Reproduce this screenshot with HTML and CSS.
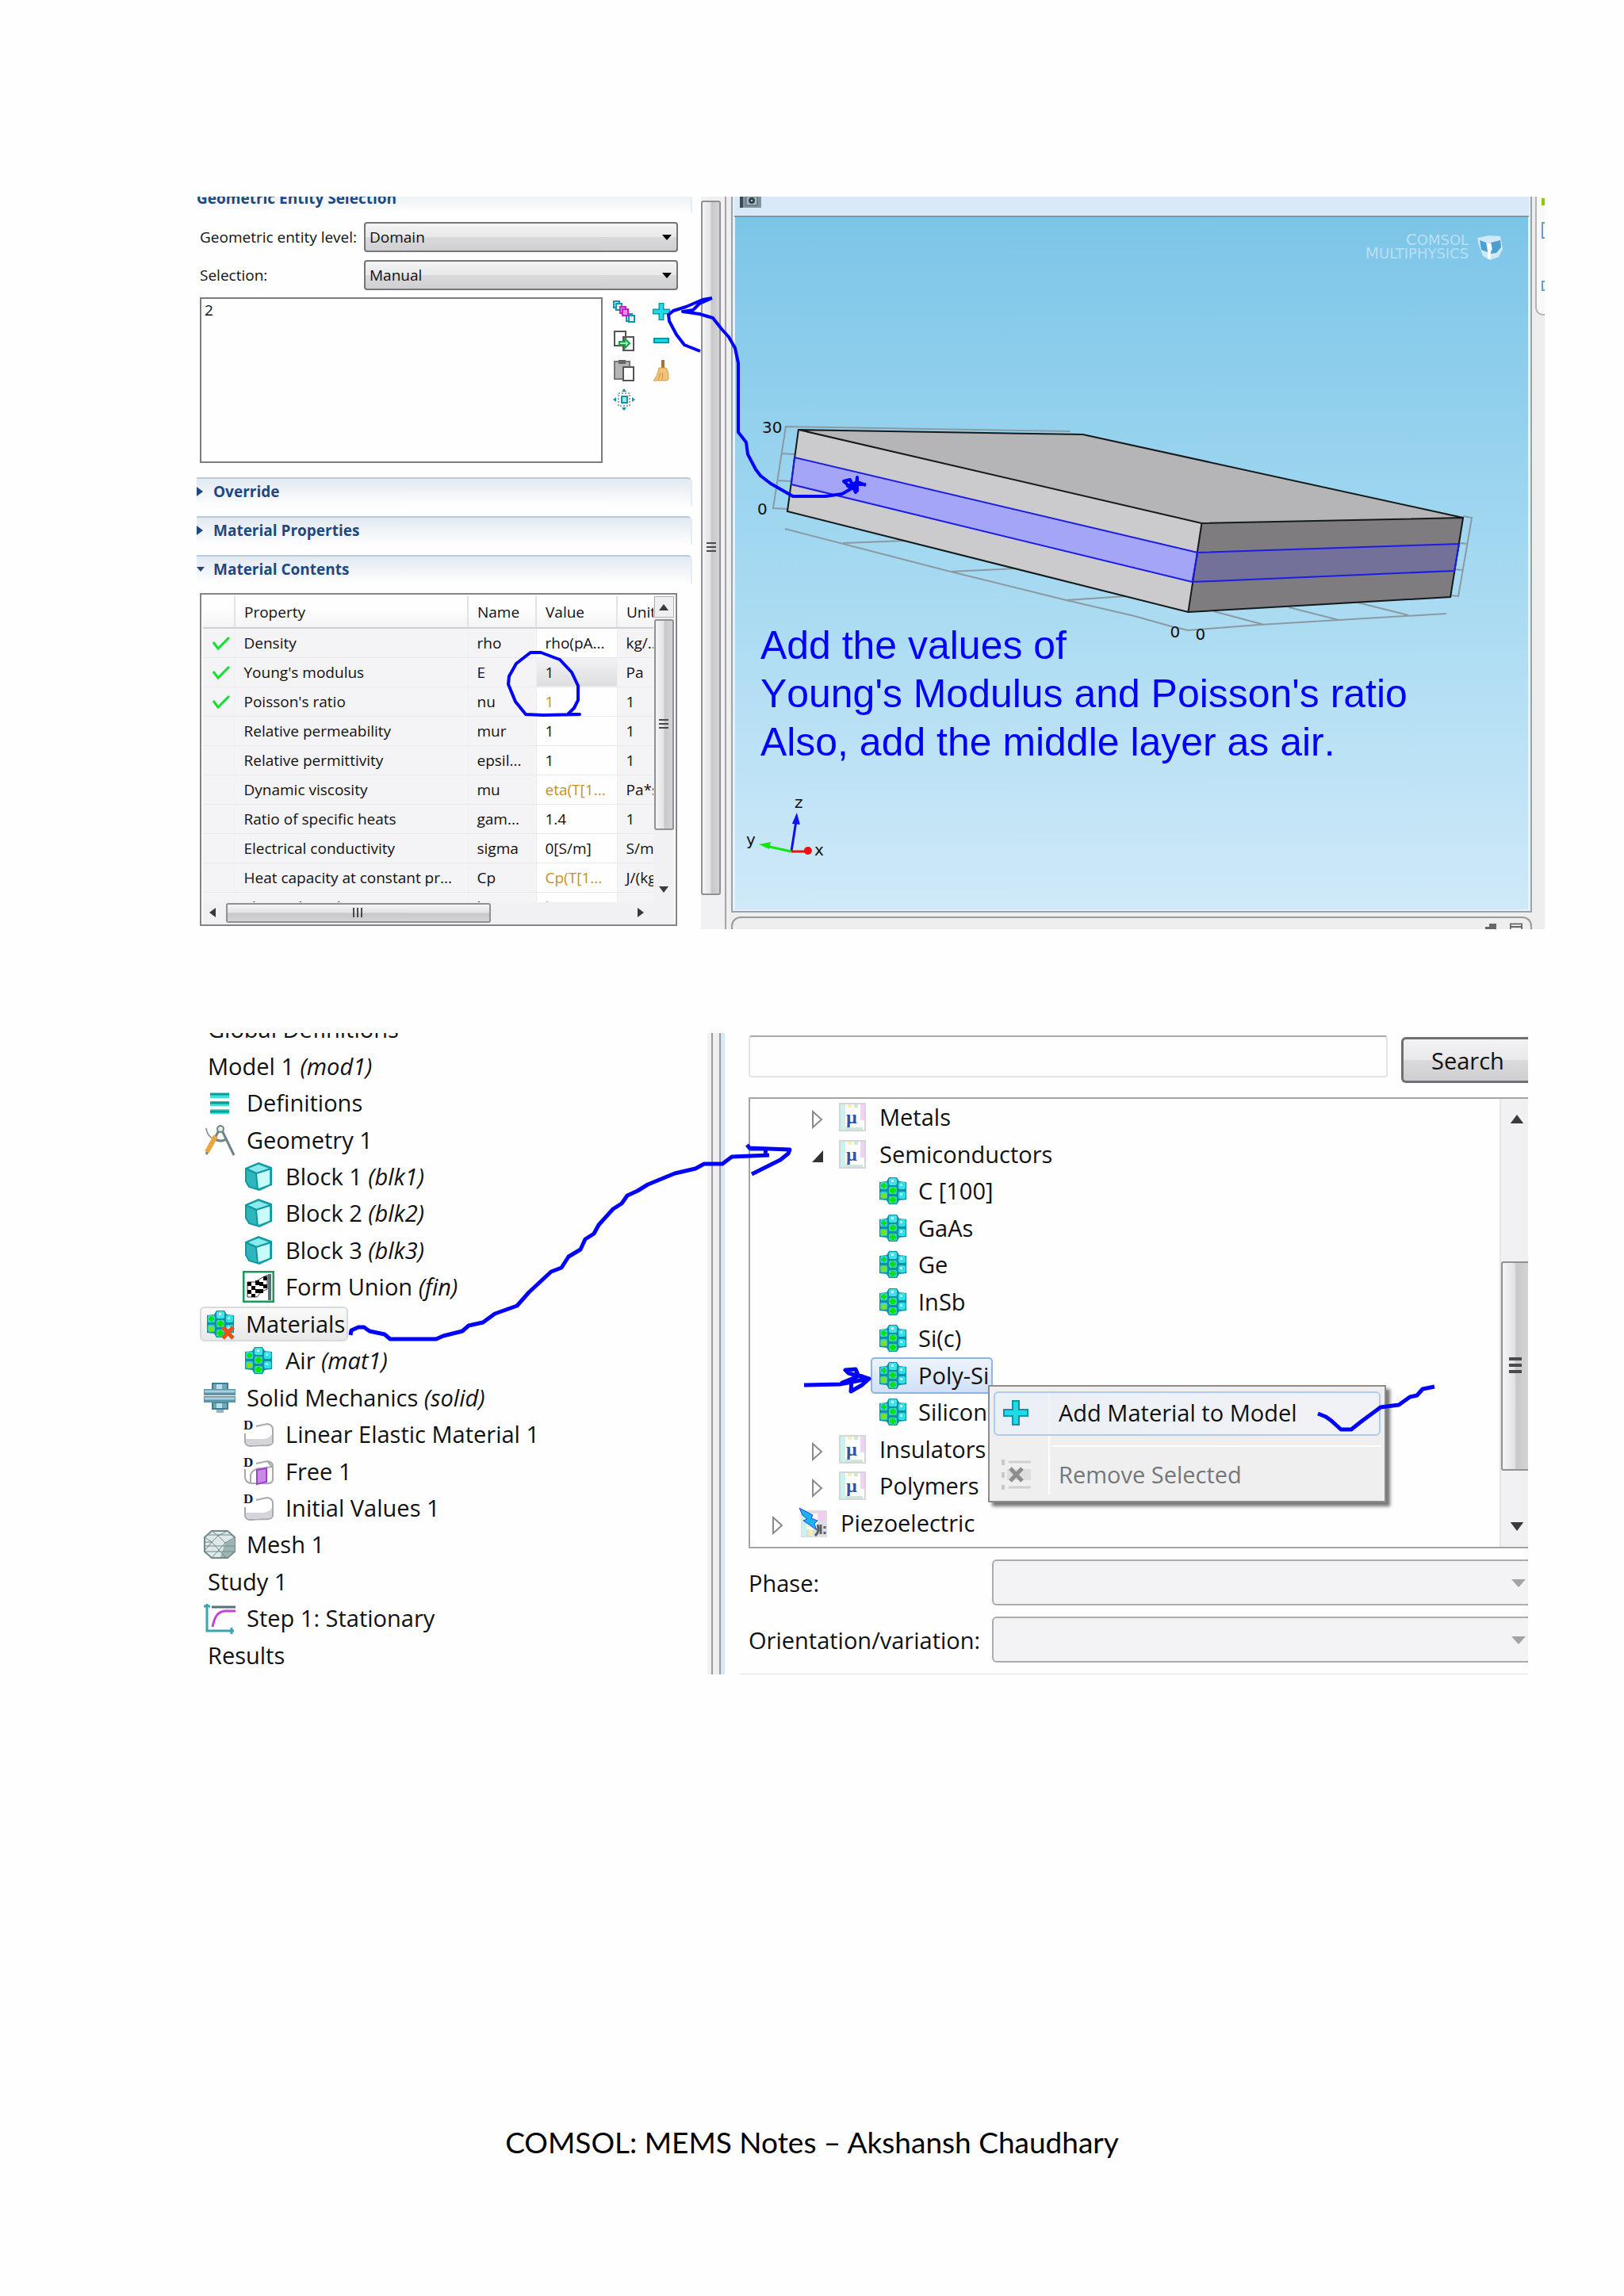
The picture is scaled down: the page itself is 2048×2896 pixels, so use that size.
FILE: index.html
```html
<!DOCTYPE html>
<html lang="en">
<head>
<meta charset="utf-8">
<title>COMSOL: MEMS Notes</title>
<link rel="stylesheet" href="styles.css">
</head>
<body>
<svg class="defs" aria-hidden="true">
  <symbol id="mat" viewBox="0 0 40 40">
    <path d="M15 3h10l3 5 9 1v22l-9 1-3 5H15l-3-5-9-1V9l9-1z" fill="#128fa8"/>
    <g>
      <rect x="4" y="9" width="9" height="9" rx="2" fill="#35d6d6"/>
      <rect x="4" y="21" width="9" height="9" rx="2" fill="#35d6c0"/>
      <rect x="27" y="9" width="9" height="9" rx="2" fill="#2fe0e6"/>
      <rect x="27" y="21" width="9" height="9" rx="2" fill="#2fe0e6"/>
      <rect x="15" y="4" width="10" height="9" rx="2" fill="#3fe4ea"/>
      <rect x="15" y="15" width="10" height="9" rx="2" fill="#35d6b0"/>
      <rect x="15" y="27" width="10" height="9" rx="2" fill="#35d6b0"/>
    </g>
    <g fill="#0ae00a"><path d="M7 10h3v2h2v3h-2v2H7v-2H5v-3h2z"/><path d="M18 16h4v2h2v3h-2v2h-4v-2h-2v-3h2z"/><path d="M18 28h4v2h2v3h-2v2h-4v-2h-2v-3h2z"/></g>
    <rect x="6" y="23" width="6" height="6" fill="#7ee01c"/>
    <path d="M18 6h3v3h-3zM29 11h3v3h-3zM29 23h3v3h-3z" fill="#c8ffff"/>
  </symbol>
  <symbol id="matx" viewBox="0 0 40 40">
    <use href="#mat" width="40" height="40"/>
    <path d="M23 24l13 14M36 24L23 38" stroke="#e8501c" stroke-width="5" fill="none"/>
  </symbol>
  <symbol id="block" viewBox="0 0 40 40">
    <path d="M4 10L20 3l16 6v21l-15 7L8 33 4 26z" fill="#2fb6bd"/>
    <path d="M7 10l13-5 13 5-15 5z" fill="#8deaec"/>
    <path d="M17 16l17-5v19l-15 5z" fill="#c9fbfb"/>
    <path d="M4 10l13 6 2 21M17 16l19-6M4 10L20 3l16 6v21l-15 7L8 33 4 26z" fill="none" stroke="#0d98a2" stroke-width="2"/>
  </symbol>
  <symbol id="defn" viewBox="0 0 40 40">
    <path d="M8 8h24v6H8zM8 18h24v6H8zM8 28h24v6H8z" fill="#3fe0d8"/>
    <path d="M8 9h24M8 20h24M8 31h24" stroke="#0e9d96" stroke-width="3"/>
  </symbol>
  <symbol id="geom" viewBox="0 0 40 40">
    <path d="M3 5c1 8 6 14 16 15" fill="none" stroke="#8a9b9b" stroke-width="2"/>
    <path d="M20 6L3 38M22 6l16 33M13 18c5 4 12 4 16 0" fill="none" stroke="#6f8484" stroke-width="3"/>
    <path d="M15 15l-11 20" stroke="#eaa63c" stroke-width="6"/>
    <circle cx="21" cy="6" r="4" fill="#e4ecec" stroke="#6f8484" stroke-width="2"/>
  </symbol>
  <symbol id="flag" viewBox="0 0 40 40">
    <rect x="1" y="1" width="38" height="38" fill="#fff" stroke="#1b9a5c" stroke-width="3"/>
    <path d="M6 14h10l6-4 9-5v18l-7 3-6 7H6z" fill="#fff" stroke="#333" stroke-width="1"/>
    <path d="M6 14h5v5H6zM16 12h5v6h-5zM26 7h5v5h-5zM11 19h5v5h-5zM21 14h5v5h-5zM6 24h5v5H6zM16 23h5v5h-5zM26 17h5v5h-5zM11 29h5v4h-5zM21 23h5v5h-5z" fill="#000"/>
    <path d="M34 4v33" stroke="#5d6d78" stroke-width="4"/>
  </symbol>
  <symbol id="solid" viewBox="0 0 40 40">
    <path d="M11 2h19v8H11zM11 26h19v8H11z" fill="#6fa9ba" stroke="#3c7f94" stroke-width="2"/>
    <path d="M16 3h7v6h-7zM16 27h7v6h-7z" fill="#bfe0ea"/>
    <path d="M0 9h40v8H0zM0 18h40v8H0z" fill="#5d95a8"/>
    <path d="M1 12h38M1 21h38" stroke="#a9d0dc" stroke-width="3"/>
    <path d="M16 35h9v4h-9z" fill="#8fb6c2"/>
  </symbol>
  <symbol id="dom" viewBox="0 0 40 40">
    <path d="M3 19v11q1 4 6 5l16-1q12 1 13-4V14q0-6-7-7L17 10" fill="#fff" stroke="#a9a9ae" stroke-width="2"/>
    <path d="M4 26h20q9 0 13-6v9q0 4-6 4l-20 1q-6 0-7-5z" fill="#d4d4da"/>
    <text x="1" y="14" class="dom-tag">D</text>
  </symbol>
  <symbol id="free" viewBox="0 0 40 40">
    <path d="M3 17v11q1 6 8 7h16q11 1 11-5V13q0-5-7-6L17 10M10 34V24q3-8 14-8l13-2M32 8l5 6" fill="#fff" stroke="#a9a9ae" stroke-width="2"/>
    <path d="M18 18l12-2v17l-12 3z" fill="#c98ae4" stroke="#a13fd0" stroke-width="2"/>
    <text x="1" y="14" class="dom-tag">D</text>
  </symbol>
  <symbol id="mesh" viewBox="0 0 40 40">
    <path d="M10 3h20l9 8v18l-9 8H10l-9-8V11z" fill="#dfe8e8" stroke="#72898a" stroke-width="2"/>
    <path d="M27 18l12-6v16l-9 8h-9z" fill="#9db4b4"/>
    <path d="M1 11l9 6 8-8 9 9 12-7M1 17l9 0 9 10 8-9M1 28l9-11M10 37l9-10 9 10M1 22h38M10 3l8 6 12-6M1 29h38M5 8h30" fill="none" stroke="#72898a" stroke-width="1"/>
  </symbol>
  <symbol id="step" viewBox="0 0 40 40">
    <path d="M4 2v34h34M0 5h8M35 32v8" fill="none" stroke="#3aa6ac" stroke-width="3"/>
    <path d="M10 6h30" stroke="#5b6f7d" stroke-width="3"/>
    <path d="M11 31C14 16 19 11 28 11h12" fill="none" stroke="#c63fe0" stroke-width="3"/>
  </symbol>
  <symbol id="mu" viewBox="0 0 34 36">
    <path d="M1 1h32v34H1z" fill="#fff" stroke="#d5d5de" stroke-width="2"/>
    <path d="M2 2h6v32H2z" fill="#c8f4ec"/><path d="M27 2h5v20h-5z" fill="#f2d2f2"/><path d="M11 2h5v4h-5z" fill="#fbeeb0"/><path d="M19 2h5v4h-5z" fill="#cdeccf"/><path d="M8 31h22v3H8z" fill="#cfe9d6"/>
    <text x="9" y="26" class="mu-tag">µ</text>
  </symbol>
  <symbol id="piezo" viewBox="0 0 36 40">
    <path d="M2 4h33v34H2z" fill="#dedee6"/><path d="M3 12h6v24H3z" fill="#c8f4ec"/><path d="M24 5h9v12h-9z" fill="#f0cdf0"/><path d="M12 26h5v10h-5z" fill="#fbeeb0"/>
    <path d="M9 8h14v20H9z" fill="#fff"/>
    <path d="M0 1l17 9-2 4 8 3-4 4 3 8L5 17l5-2L4 10z" fill="#18b4f4" stroke="#2347e0" stroke-width="1"/>
    <path d="M20 36q6-5 3-14M27 22v12M32 24v3M32 31v3" fill="none" stroke="#5a5f66" stroke-width="3"/>
  </symbol>
  <symbol id="plus" viewBox="0 0 32 32">
    <path d="M12 1h8v11h11v8H20v11h-8V20H1v-8h11z" fill="#1edbe6" stroke="#0e94a4" stroke-width="2"/>
  </symbol>
</svg>

<main class="page">
  <section class="shot shot-settings">
    <div class="settings">
      <h2 class="bar bar-cut">Geometric Entity Selection</h2>
      <div class="fields">
        <label for="level">Geometric entity level:</label>
        <span class="drop"><select id="level"><option>Domain</option></select></span>
        <label for="selmode">Selection:</label>
        <span class="drop"><select id="selmode"><option>Manual</option></select></span>
      </div>
      <div class="picker">
        <select class="entities" size="4" aria-label="Selected domains"><option>2</option></select>
        <div class="tools">
          <button aria-label="Create selection"><svg viewBox="0 0 28 28"><g stroke-width="2" fill="#d9f6fa" stroke="#1594ac"><path d="M1 1h7v8H1z"/><path d="M4 4h7v8H4z"/><path d="M17 17h7v9h-7z"/><path d="M20 19h7v8h-7z"/></g><g fill="#f48af0" stroke="#c21fc0" stroke-width="2"><path d="M9 8h7v8H9z"/><path d="M12 11h7v8h-7z"/></g></svg></button>
          <button aria-label="Add to selection"><svg viewBox="-4 -4 40 40"><use href="#plus" width="32" height="32"/></svg></button>
          <button aria-label="Copy selection"><svg viewBox="0 0 28 28"><path d="M2 2h14v18H2zM13 9h13v17H13z" fill="#fff" stroke="#555" stroke-width="2"/><path d="M8 15h7v-4l6 6-6 6v-4H8z" fill="#9df0b0" stroke="#18a04a" stroke-width="2"/></svg></button>
          <button aria-label="Remove from selection"><svg viewBox="0 0 28 28"><path d="M5 11h18v5H5z" fill="#1edbe6" stroke="#0e94a4" stroke-width="2"/></svg></button>
          <button aria-label="Paste selection"><svg viewBox="0 0 28 28"><path d="M2 3h19v22H2z" fill="#b4b4b4" stroke="#777" stroke-width="2"/><path d="M7 1h9v5H7z" fill="#666"/><path d="M13 10h13v17H13z" fill="#fff" stroke="#555" stroke-width="2"/></svg></button>
          <button aria-label="Clear selection"><svg viewBox="0 0 28 28"><path d="M14 1h4v11h-4z" fill="#a5713c"/><path d="M11 11h9q4 6 3 14l-2 2H4q5-5 7-16z" fill="#f3c476" stroke="#d29a4a" stroke-width="1"/><path d="M10 26l3-9M15 26l1-9" stroke="#c98f40"/></svg></button>
          <button aria-label="Zoom to selection"><svg viewBox="0 0 28 28"><path d="M7 6h14v16H7z" fill="none" stroke="#14506c" stroke-width="1" stroke-dasharray="2 2"/><path d="M11 10h7v8h-7z" fill="#8fe9f2" stroke="#1594ac" stroke-width="2"/><path d="M11 4l3-4 3 4zM11 24l3 4 3-4zM4 11l-4 3 4 3zM24 11l4 3-4 3z" fill="#1594ac"/></svg></button>
        </div>
      </div>
      <h2 class="bar"><svg viewBox="0 0 10 12"><path d="M0 0l8 6-8 6z"/></svg>Override</h2>
      <h2 class="bar"><svg viewBox="0 0 10 12"><path d="M0 0l8 6-8 6z"/></svg>Material Properties</h2>
      <h2 class="bar"><svg viewBox="0 0 10 12"><path d="M0 3h10l-5 6z"/></svg>Material Contents</h2>
      <div class="frame">
        <div class="clip">
          <table class="props">
            <colgroup><col class="c-ok"><col class="c-prop"><col class="c-name"><col class="c-val"><col class="c-unit"></colgroup>
            <thead><tr><th></th><th>Property</th><th>Name</th><th>Value</th><th>Unit</th></tr></thead>
            <tbody>
              <tr><td><svg class="ok" viewBox="0 0 24 18"><path d="M2 8l6 8L22 2"/></svg></td><td>Density</td><td>rho</td><td>rho(pA...</td><td>kg/...</td></tr>
              <tr><td><svg class="ok" viewBox="0 0 24 18"><path d="M2 8l6 8L22 2"/></svg></td><td>Young's modulus</td><td>E</td><td class="focus">1</td><td>Pa</td></tr>
              <tr><td><svg class="ok" viewBox="0 0 24 18"><path d="M2 8l6 8L22 2"/></svg></td><td>Poisson's ratio</td><td>nu</td><td class="amber">1</td><td>1</td></tr>
              <tr><td></td><td>Relative permeability</td><td>mur</td><td>1</td><td>1</td></tr>
              <tr><td></td><td>Relative permittivity</td><td>epsil...</td><td>1</td><td>1</td></tr>
              <tr><td></td><td>Dynamic viscosity</td><td>mu</td><td class="amber">eta(T[1...</td><td>Pa*s</td></tr>
              <tr><td></td><td>Ratio of specific heats</td><td>gam...</td><td>1.4</td><td>1</td></tr>
              <tr><td></td><td>Electrical conductivity</td><td>sigma</td><td>0[S/m]</td><td>S/m</td></tr>
              <tr><td></td><td>Heat capacity at constant pr...</td><td>Cp</td><td class="amber">Cp(T[1...</td><td>J/(kg...</td></tr>
              <tr><td></td><td>Thermal conductivity</td><td>k</td><td class="amber">k(T[1...</td><td>W/(m...</td></tr>
            </tbody>
          </table>
        </div>
        <div class="vbar">
          <span class="cap"><svg viewBox="0 0 12 8"><path d="M6 0l6 8H0z"/></svg></span>
          <span class="thumb"><i class="grip"></i></span>
          <svg class="end" viewBox="0 0 12 8"><path d="M0 0h12L6 8z"/></svg>
        </div>
        <div class="hbar">
          <svg viewBox="0 0 8 12"><path d="M8 0v12L0 6z"/></svg>
          <span class="thumb"><i class="grip"></i></span>
          <svg class="end" viewBox="0 0 8 12"><path d="M0 0v12l8-6z"/></svg>
        </div>
      </div>
    </div>
    <div class="mainbar"><span class="thumb"><i class="grip"></i></span></div>
    <div class="sash"></div>
    <div class="graphics">
      <div class="view">
        <div class="viewbar"><svg viewBox="0 0 27 14"><path d="M0 0h27v14H0z" fill="#7e969f"/><path d="M0 0h4v14H0z" fill="#3d4a52"/><path d="M8 0h14v11H8z" fill="#a9bcc4" stroke="#4c5b63"/><circle cx="15" cy="5" r="4" fill="#33434c"/><circle cx="15" cy="5" r="1" fill="#fff"/></svg></div>
        <svg class="scene" viewBox="926 274 1001 873" preserveAspectRatio="none" role="img" aria-label="Block geometry with the middle layer selected">
          <defs><linearGradient id="sky" x1="0" y1="0" x2="0" y2="1"><stop offset="0" stop-color="#7cc5e8"/><stop offset=".5" stop-color="#a4d9f1"/><stop offset="1" stop-color="#cfe9f8"/></linearGradient></defs>
          <path d="M926 274h1001v873H926z" fill="url(#sky)"/>
          <g fill="none" stroke="#8b9aa2" stroke-width="2">
            <path d="M1349 544L990 538l-16 103 18 1M985 572l17 1M980 606l17 1"/>
            <path d="M1845 651l11 2-17 99-10-1M1840 685l11 1M1834 718l10 1"/>
            <path d="M989 667l209 54 146 36 86 20 50 14 18 4 90-7 236-14M1062 685l79-3M1198 721l81-4M1344 757l76-5M1530 771l64 17M1625 766l63 16M1712 760l64 16"/>
          </g>
          <path d="M1006 542l359 6 480 105-330 7z" fill="#b5b4b6"/>
          <path d="M1006 542l509 118-17 112-506-127z" fill="#cbcacc"/>
          <path d="M1515 660l330-7-16 100-331 19z" fill="#7e7c7e"/>
          <path d="M1001 577l509 120-7 37-506-123z" fill="#a5a5f8"/>
          <path d="M1510 697l330-11-6 34-331 14z" fill="#73719a"/>
          <path d="M1006 542l359 6 480 105-16 100-331 19-506-127zM1006 542l509 118 330-7M1515 660l-17 112" fill="none" stroke="#141a1c" stroke-width="2"/>
          <path d="M1001 577l509 120 330-11-6 34-331 14-506-123zM1510 697l-7 37" fill="none" stroke="#1c1ce6" stroke-width="2"/>
          <g class="tick"><text x="960" y="546">30</text><text x="954" y="649">0</text><text x="1475" y="804">0</text><text x="1507" y="807">0</text><text x="1001" y="1019">z</text><text x="940" y="1066">y</text><text x="1026" y="1079">x</text></g>
          <path d="M997 1074l6-38" stroke="#1010f0" stroke-width="3"/><path d="M1004 1025l4 15-10-1z" fill="#1010f0"/>
          <path d="M997 1074l-32-7" stroke="#10e810" stroke-width="3"/><path d="M956 1065l15-3-2 9z" fill="#10e810"/>
          <path d="M997 1074h20" stroke="#f01010" stroke-width="3"/><circle cx="1018" cy="1073" r="5" fill="#f01010"/>
          <g class="brand"><text x="1852" y="309"><tspan class="brand-cap">C</tspan>OMSOL</text><text x="1852" y="326"><tspan class="brand-cap">M</tspan>ULTIPHYSICS</text></g>
          <path d="M1863 300l15-3 14 1 3 16-5 10-11 4-9-5-5-14z" fill="#cfe9f6"/><path d="M1866 303l8 3 2 12-8-3zM1880 306l12-3 1 9-6 7-8 1 3-6z" fill="#4b9fd0"/><path d="M1876 307l5 1-2 19-3-1z" fill="#fff"/>
          <g class="note"><text x="958" y="831">Add the values of</text><text x="958" y="892">Young's Modulus and Poisson's ratio</text><text x="958" y="953">Also, add the middle layer as air.</text></g>
        </svg>
      </div>
      <div class="messages">
        <svg viewBox="0 0 14 10"><path d="M5 1h9v7H5zM0 5h8v5H0z" fill="#666"/></svg>
        <svg viewBox="0 0 18 10"><path d="M1 12V1h16v11M1 5h16" fill="none" stroke="#666" stroke-width="2"/></svg>
      </div>
    </div>
    <div class="edge"><div class="edge-tab"><i class="chip-a"></i><i class="chip-b"></i><i class="chip-c"></i></div></div>
    <svg class="ink" viewBox="248 248 1700 924" aria-hidden="true"><path d="M898 376l-12 2-21 9-16 5-6 5 1 8 9 17 10 13 10 4 10 4M898 376l-16 7-8 8-13 2 21 3 17 5 11 14 9 10 8 14 4 19v87l10 13 2 15 10 19 6 8 13 10 14 8 14 8h41L1062 623 1074 616 1064 607 1072 605 1079 621 1081 602V619L1069 613 1081 608 1092 612"/><path d="M1074 611h18"/><path d="M669 823h13l24 9 15 16 8 17v18l-5 10-8 8h15l-46 1-22-1-13-16-9-22 1-10 9-16z"/></svg>
  </section>

  <section class="shot shot-library">
    <ul class="tree model">
      <li>Global Definitions</li>
      <li>Model 1&nbsp;<em>(mod1)</em></li>
      <li><svg><use href="#defn"/></svg>Definitions</li>
      <li><svg><use href="#geom"/></svg>Geometry 1</li>
      <li class="deep"><svg><use href="#block"/></svg>Block 1&nbsp;<em>(blk1)</em></li>
      <li class="deep"><svg><use href="#block"/></svg>Block 2&nbsp;<em>(blk2)</em></li>
      <li class="deep"><svg><use href="#block"/></svg>Block 3&nbsp;<em>(blk3)</em></li>
      <li class="deep"><svg><use href="#flag"/></svg>Form Union&nbsp;<em>(fin)</em></li>
      <li class="current"><span><svg><use href="#matx"/></svg>Materials</span></li>
      <li class="deep"><svg><use href="#mat"/></svg>Air&nbsp;<em>(mat1)</em></li>
      <li><svg><use href="#solid"/></svg>Solid Mechanics&nbsp;<em>(solid)</em></li>
      <li class="deep"><svg><use href="#dom"/></svg>Linear Elastic Material 1</li>
      <li class="deep"><svg><use href="#free"/></svg>Free 1</li>
      <li class="deep"><svg><use href="#dom"/></svg>Initial Values 1</li>
      <li><svg><use href="#mesh"/></svg>Mesh 1</li>
      <li>Study 1</li>
      <li><svg><use href="#step"/></svg>Step 1: Stationary</li>
      <li>Results</li>
    </ul>
    <div class="split"></div>
    <div class="browser">
      <div class="find"><input type="text" aria-label="Search materials"><button>Search</button></div>
      <div class="results">
        <ul class="tree lib">
          <li><svg class="tw" viewBox="0 0 14 24"><path d="M1 2v20l11-10z" fill="#fff" stroke="#8a8a8a" stroke-width="2"/></svg><svg class="mu"><use href="#mu"/></svg>Metals</li>
          <li><svg class="tw" viewBox="0 0 14 24"><path d="M14 4v15H0z" fill="#333"/></svg><svg class="mu"><use href="#mu"/></svg>Semiconductors</li>
          <li class="leaf"><span><svg><use href="#mat"/></svg>C [100]</span></li>
          <li class="leaf"><span><svg><use href="#mat"/></svg>GaAs</span></li>
          <li class="leaf"><span><svg><use href="#mat"/></svg>Ge</span></li>
          <li class="leaf"><span><svg><use href="#mat"/></svg>InSb</span></li>
          <li class="leaf"><span><svg><use href="#mat"/></svg>Si(c)</span></li>
          <li class="leaf chosen"><span><svg><use href="#mat"/></svg>Poly-Si</span></li>
          <li class="leaf"><span><svg><use href="#mat"/></svg>Silicon</span></li>
          <li><svg class="tw" viewBox="0 0 14 24"><path d="M1 2v20l11-10z" fill="#fff" stroke="#8a8a8a" stroke-width="2"/></svg><svg class="mu"><use href="#mu"/></svg>Insulators</li>
          <li><svg class="tw" viewBox="0 0 14 24"><path d="M1 2v20l11-10z" fill="#fff" stroke="#8a8a8a" stroke-width="2"/></svg><svg class="mu"><use href="#mu"/></svg>Polymers</li>
          <li class="root"><svg class="tw" viewBox="0 0 14 24"><path d="M1 2v20l11-10z" fill="#fff" stroke="#8a8a8a" stroke-width="2"/></svg><svg class="mu"><use href="#piezo"/></svg>Piezoelectric</li>
        </ul>
        <div class="vbar big">
          <svg viewBox="0 0 12 8"><path d="M6 0l6 8H0z"/></svg>
          <span class="thumb"><i class="grip"></i></span>
          <svg class="end" viewBox="0 0 12 8"><path d="M0 0h12L6 8z"/></svg>
        </div>
      </div>
      <div class="options">
        <label for="phase">Phase:</label>
        <span class="drop off"><select id="phase" disabled></select></span>
        <label for="orient">Orientation/variation:</label>
        <span class="drop off"><select id="orient" disabled></select></span>
      </div>
      <div class="menu">
        <button class="hot"><svg viewBox="-4 -4 40 40"><use href="#plus" width="32" height="32"/></svg><span>Add Material to Model</span></button>
        <hr>
        <button disabled><svg viewBox="0 0 40 40"><path d="M11 4h28M11 36h28" stroke="#d0d0d0" stroke-width="3"/><path d="M2 1h4v7H2zM2 17h4v7H2zM2 33h4v6H2z" fill="#c8c8c8"/><path d="M9 13h30v14H9z" fill="#dedede"/><path d="M13 12l15 16M28 12L13 28" stroke="#8d8d8d" stroke-width="5"/></svg><span>Remove Selected</span></button>
      </div>
    </div>
    <svg class="ink thick" viewBox="248 1303 1679 809" aria-hidden="true"><path d="M442 1684l1-6 9-4h7l7 5 19 4 7 6h58l9-4 24-6 8-7 18-4 15-11 28-10 15-17 28-26 13-5 9-14 15-9 6-13 11-7 6-11 18-20 11-7 7-10 13-6 13-8 34-14 26-6 11-6h23l12-9 47-2M942 1444l4 5 20 0-1 6M944 1448l52 2-2 5-10 8-36 18"/><path d="M1014 1747l45-1 37-7-26-7-4-4 13-1 3 7 14 5-9 8-14 8 1-14-12 3 20-8"/><path d="M1662 1783l10 4 7 5 12 11h13l14-11 23-17 23-3 14-10 9-2 7-8 15-3"/></svg>
  </section>

  <footer>COMSOL: MEMS Notes – Akshansh Chaudhary</footer>
</main>
</body>
</html>
```
FILE: styles.css
```css
* { box-sizing: border-box; }
body { margin: 0; background: #fefefe; color: #111; font-family: "Open Sans", "Noto Sans", sans-serif; font-size: 19px; }
h2, ul { margin: 0; padding: 0; list-style: none; }
button, select, input { font: inherit; color: inherit; border-radius: 0; margin: 0; }
svg { flex: none; display: block; }
.defs { display: none; }
.page { padding: 248px 100px 160px 248px; }
.shot { position: relative; overflow: hidden; }

/* ---- settings window and graphics ---- */
.shot-settings { display: grid; grid-template-columns: 636px 30px 8px 1fr 16px; height: 924px; margin-bottom: 131px; }
.settings { min-width: 0; }
.bar { display: flex; align-items: center; height: 36px; width: 625px; margin-bottom: 13px; padding-bottom: 2px; border-top: 2px solid #bccbdc; border-right: 2px solid #e6ecf4; border-radius: 0 6px 0 0; background: linear-gradient(#e2e9f2, #fefefe); color: #1c4a80; font-size: 19px; font-weight: 700; line-height: 30px; }
.bar svg { width: 10px; height: 12px; margin-right: 11px; fill: #1c4a80; }
.bar-cut { margin: -16px 0 12px; }
.fields { display: grid; grid-template-columns: 207px 396px; gap: 10px 0; align-items: center; padding-left: 4px; white-space: nowrap; }
.drop { position: relative; display: block; }
.drop select { appearance: none; display: block; width: 100%; height: 38px; padding: 0 5px; border: 2px solid #77757a; border-radius: 4px; background: linear-gradient(#f4f4f4, #e9e8ea 50%, #dad9db 50%, #d0cfd1); opacity: 1; }
.drop::after { content: ""; position: absolute; right: 8px; top: 16px; border: 6px solid transparent; border-top: 7px solid #000; border-bottom: 0; pointer-events: none; }
.picker { display: flex; gap: 13px; padding-left: 4px; margin: 9px 0 18px; }
.entities { appearance: none; width: 508px; height: 209px; padding: 1px 4px; border: 2px solid #7d7b7f; background: #fefefe; overflow: hidden; outline: 0; }
.entities option { padding: 0; min-height: 28px; line-height: 28px; }
.tools { display: grid; grid-template-columns: 28px 28px; grid-auto-rows: 28px; gap: 9px 19px; padding-top: 4px; }
.tools button { padding: 0; border: 0; background: none; }
.tools svg { width: 28px; height: 28px; }
.frame { display: grid; grid-template-columns: 1fr 26px; grid-template-rows: 1fr 28px; width: 602px; height: 420px; margin: -1px 0 0 4px; padding: 2px; border: 2px solid #858387; background: #fefefe; }
.clip { overflow: hidden; height: 386px; }
.props { table-layout: fixed; width: 620px; border-collapse: collapse; line-height: 26px; }
.c-ok { width: 40px; } .c-prop { width: 294px; } .c-name { width: 86px; } .c-val { width: 102px; } .c-unit { width: 98px; }
.props th, .props td { padding: 0 0 0 11px; text-align: left; font-weight: 400; white-space: nowrap; }
.props th { height: 40px; border-right: 2px solid #e3e3e6; border-bottom: 2px solid #d0d0d2; background: linear-gradient(#fefefe 40%, #f4f4f6); }
.props td { height: 37px; border-bottom: 1px solid #e9e9eb; border-right: 1px solid #efeff1; background: #f4f3f5; }
.props td:nth-child(4) { background: #fefefe; }
.props .focus { background: linear-gradient(#f2f2f4, #dedee0) !important; }
.props .amber { color: #c8901c; }
.ok { width: 24px; height: 18px; fill: none; stroke: #10e030; stroke-width: 3; }
.vbar, .hbar { background: #f1f0f2; fill: #3a3a3a; display: flex; align-items: center; }
.vbar { flex-direction: column; }
.vbar > svg, .cap svg { width: 12px; height: 8px; }
.cap { display: grid; place-items: center; width: 25px; height: 27px; border: 1px solid #b0afb1; background: #efeef0; }
.thumb { display: grid; place-items: center; border: 2px solid #929094; border-radius: 3px; background: linear-gradient(90deg, #f4f4f5, #e4e3e5 45%, #c8c7c9 55%, #d4d3d5); }
.grip { width: 12px; height: 14px; background: repeating-linear-gradient(#4a4a4a 0 2px, transparent 2px 5px); }
.vbar .thumb { width: 25px; height: 266px; margin-top: 2px; }
.end { margin-top: auto; }
.vbar .end { margin-bottom: 12px; }
.hbar { grid-column: 1 / -1; padding: 0 38px 2px 8px; gap: 13px; }
.hbar svg { width: 8px; height: 12px; }
.hbar .thumb { width: 334px; height: 25px; background: linear-gradient(#f4f4f5, #e4e3e5 45%, #c8c7c9 55%, #d4d3d5); }
.hbar .grip { width: 14px; height: 12px; background: repeating-linear-gradient(90deg, #4a4a4a 0 2px, transparent 2px 5px); }
.hbar .end { margin: 0 0 0 auto; }
.mainbar { padding-top: 5px; background: #f1f0f2; }
.mainbar .thumb { width: 25px; height: 876px; }
.sash { border-left: 2px solid #a5a4a6; background: #efeeef; }
.graphics { display: flex; flex-direction: column; gap: 5px; background: #efeeee; min-width: 0; }
.view { flex: none; height: 903px; padding: 0 3px; border: 2px solid #9aa5a8; border-width: 0 2px 2px; background: #e6f2fb; }
.viewbar { height: 26px; margin: 0 -1px; padding-left: 7px; border-bottom: 2px solid #8d9298; box-shadow: 0 2px #fefefe; background: #dae9fa; }
.viewbar svg { width: 27px; height: 14px; }
.scene { width: 100%; height: 873px; }
.tick { font: 20px "DejaVu Sans", sans-serif; fill: #111; }
.note { font: 50px "Liberation Sans", Arial, sans-serif; font-kerning: none; fill: #00f; }
.brand { font: 18px "DejaVu Sans", sans-serif; text-anchor: end; fill: #b9dff3; }
.brand-cap { font-size: 20px; }
.messages { display: flex; gap: 16px; justify-content: flex-end; flex: 1; padding: 6px 10px 0; border: 2px solid #9a9a9c; border-bottom: 0; border-radius: 12px 12px 0 0; }
.messages svg { width: 16px; height: 10px; }
.edge { background: #efeeee; padding-left: 4px; }
.edge-tab { display: flex; flex-direction: column; align-items: flex-end; height: 150px; border: 2px solid #b4b3b5; border-width: 0 0 2px 2px; border-radius: 0 0 0 10px; background: #f8f8f9; }
.chip-a { width: 4px; height: 9px; margin-top: 2px; background: #8fc61c; }
.chip-b, .chip-c { width: 4px; height: 21px; margin-top: 21px; border: 2px solid #6d9cc0; border-right: 0; }
.chip-c { height: 13px; margin-top: 53px; }
.ink { position: absolute; inset: 0; width: 100%; height: 100%; pointer-events: none; fill: none; stroke: #00f; stroke-width: 4; stroke-linejoin: round; }
.thick { stroke-width: 5; }

/* ---- model tree and material browser ---- */
.shot-library { display: grid; grid-template-columns: 644px 22px 1fr; height: 809px; margin-right: 21px; font-size: 29px; }
.tree { display: grid; white-space: nowrap; line-height: 36px; }
.tree li { display: flex; align-items: center; min-height: 0; }
.tree svg { width: 40px; height: 40px; }
.model { grid-template-rows: repeat(18, 1fr); height: 836px; margin-top: -28px; padding-left: 14px; }
.model li > svg { margin: 0 14px 0 -5px; }
.model .deep { padding-left: 49px; }
.current span { display: flex; align-items: center; height: 44px; margin-left: -10px; padding: 0 2px 0 4px; border: 2px solid #dadada; border-radius: 6px; background: linear-gradient(#fafafa, #e8e8e8); }
.current svg { margin: 0 12px 0 0; }
.split { border: 2px solid #9b9a9d; border-width: 0 2px; margin: 0 5px 0 5px; background: #efeef0; box-shadow: -5px 0 #f2f1f3, 5px 0 #d9e8f7; }
.browser { position: relative; padding: 3px 0 0 30px; min-width: 0; }
.find { display: flex; gap: 17px; height: 63px; }
.find input { flex: 1; min-width: 0; height: 53px; border: 2px solid #e2e4e8; border-top-color: #a9a9ab; border-radius: 4px; background: #fefefe; }
.find button { width: 160px; height: 58px; margin-top: 2px; padding: 0 0 0 35px; text-align: left; border: 3px solid #716f73; border-right: 0; border-radius: 6px 0 0 6px; background: linear-gradient(#f2f1f3, #e9e8ea 50%, #dad9db 50%, #cfced0); }
.results { display: flex; height: 569px; margin-top: 15px; border: 2px solid #a5a3a6; border-right: 0; background: #fefefe; }
.lib { flex: 1; grid-template-rows: repeat(12, 1fr); height: 558px; }
.lib .tw { width: 14px; height: 24px; margin: 6px 20px 0 78px; }
.lib .mu { width: 34px; height: 36px; margin-right: 17px; }
.lib .root .tw { margin-left: 28px; }
.lib .root .mu { width: 36px; height: 40px; margin-right: 16px; }
.leaf { padding-left: 152px; }
.leaf span { display: flex; align-items: center; gap: 12px; height: 46px; padding: 0 3px 0 6px; border: 2px solid transparent; }
.lib .chosen span { border-color: #8fb4e0; border-radius: 5px; background: linear-gradient(#eef4fc, #cfe0f6); }
.mu-tag { font: bold 24px "Liberation Serif", serif; fill: #2458b0; }
.dom-tag { font: bold 17px "Liberation Serif", serif; fill: #101840; }
.big { width: 36px; padding-top: 20px; border-left: 2px solid #e6e5e7; }
.big > svg { width: 18px; height: 11px; margin-left: 6px; }
.big .thumb { width: 100%; height: 264px; margin-top: 174px; border-right: 0; border-radius: 3px 0 0 3px; }
.big .grip { width: 16px; height: 22px; background: repeating-linear-gradient(#4a4a4a 0 4px, transparent 4px 8px); }
.big .end { margin-bottom: 20px; }
.options { display: grid; grid-template-columns: 307px 1fr; gap: 14px 0; align-items: center; margin: 14px 0 0 -11px; padding: 0 0 14px 11px; border-bottom: 2px solid #e0e3ea; white-space: nowrap; }
.off select { height: 58px; border-color: #adabae; border-right: 0; border-radius: 6px 0 0 6px; background: #f3f2f4; }
.off::after { right: 3px; top: 25px; border-width: 10px 9px 0; border-top-color: #a3a2a4; }
.menu { position: absolute; left: 332px; top: 444px; width: 502px; height: 148px; padding: 6px 5px; border: 2px solid #8d8b8e; background: #f0eff0 linear-gradient(#fff, #fff) 74px 6px / 2px 130px no-repeat; box-shadow: 5px 5px 4px #777; }
.menu button { display: flex; align-items: center; width: 100%; height: 56px; padding: 0 0 2px 6px; border: 2px solid transparent; border-radius: 6px; background: none; color: #777; line-height: 36px; }
.menu svg { width: 40px; height: 40px; margin-right: 34px; }
.menu .hot { border-color: #aecbf0; background: linear-gradient(90deg, #e8f0f8aa, #f2f4f899); color: #111; }
.menu hr { height: 2px; margin: 12px 0 8px 73px; border: 0; background: #fff; }

footer { margin: 563px -100px 0 -248px; text-align: center; font: 37px/54px Lato, "Open Sans", sans-serif; color: #000; }
```
